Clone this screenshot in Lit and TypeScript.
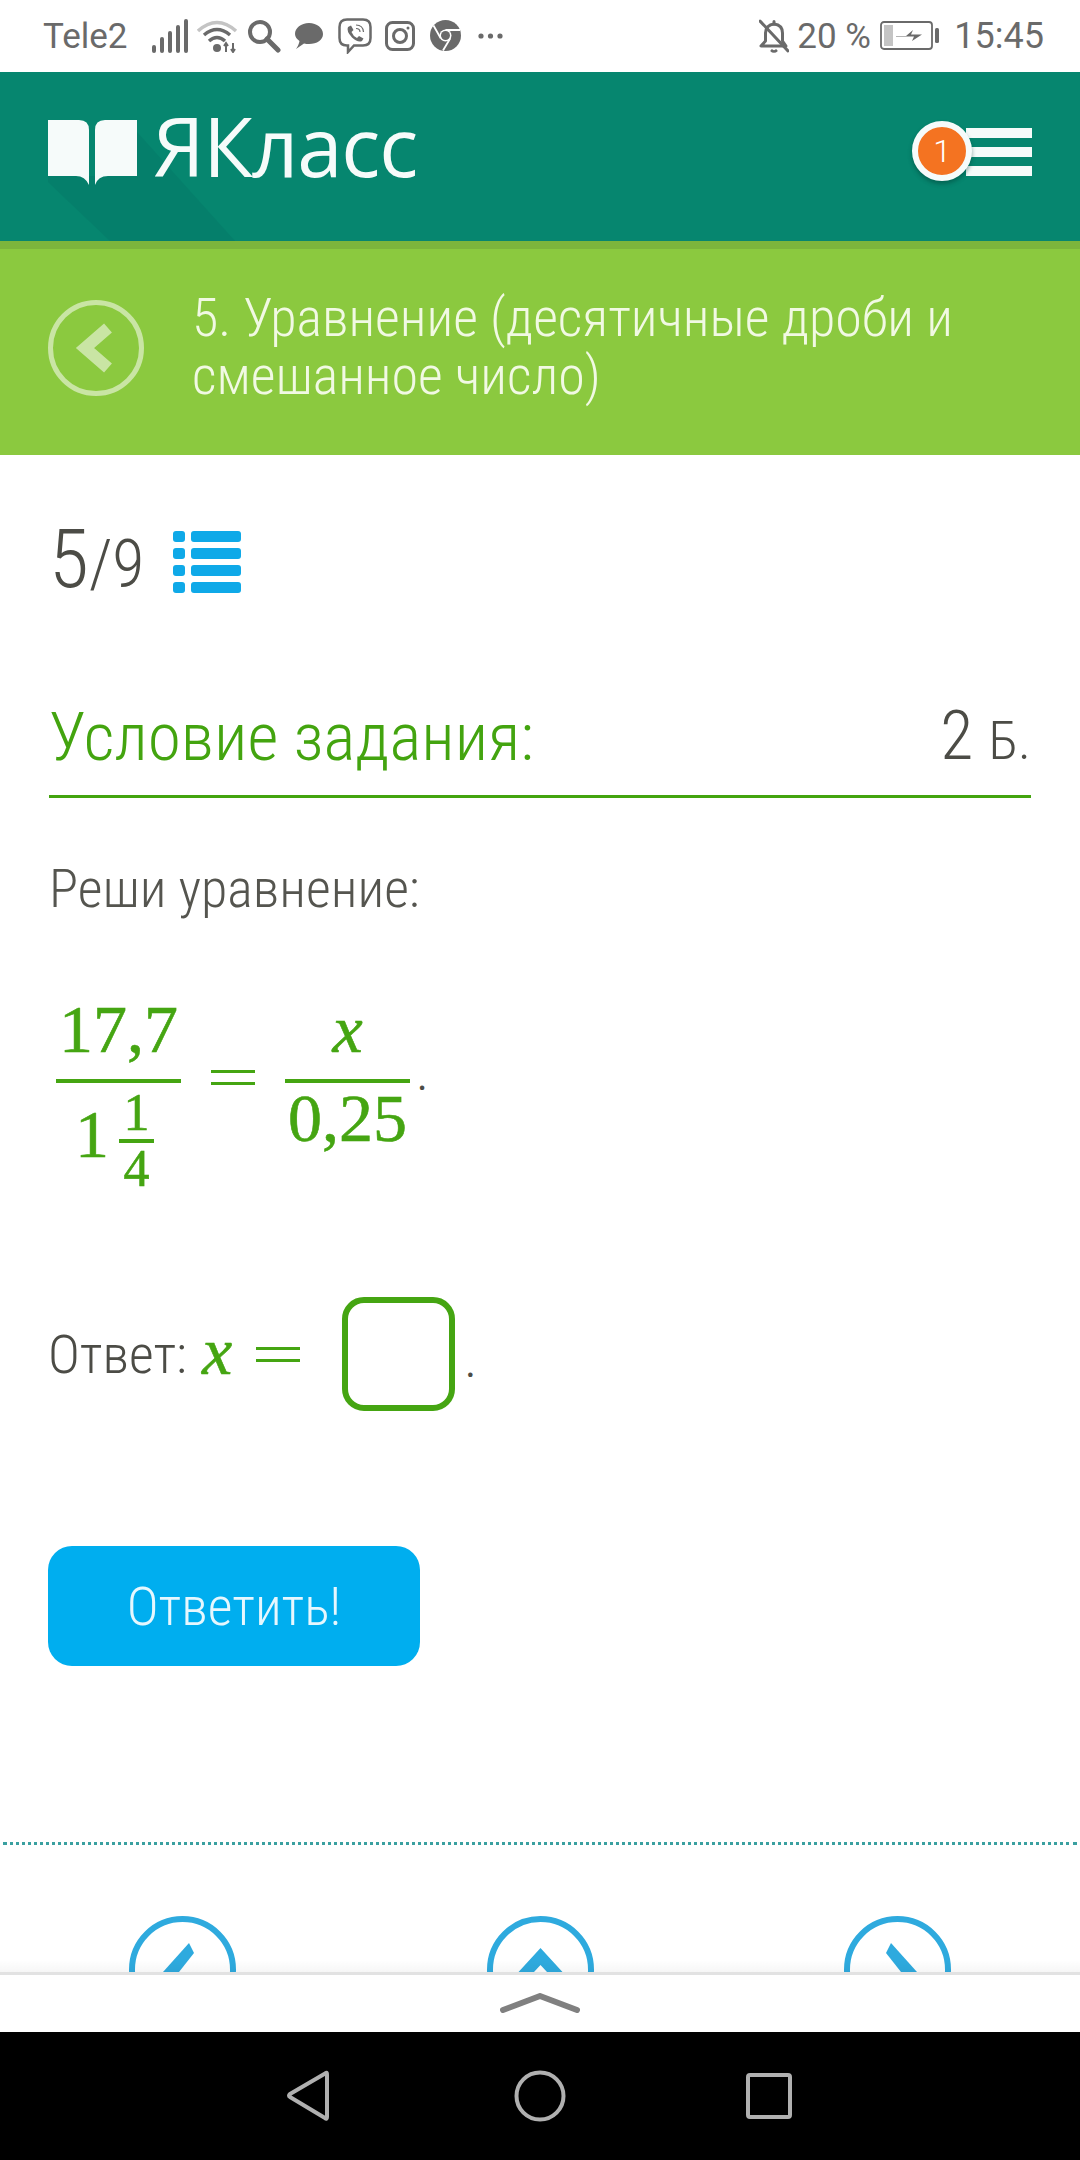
import { LitElement, html, css, svg } from "lit";
import { customElement } from "lit/decorators.js";

const GREY = "#6a6a6a";

@customElement("app-root")
export class AppRoot extends LitElement {
  static styles = css`
    :host { display: flex; flex-direction: column; width: 1080px; height: 2160px; background: #fff; overflow: hidden; font-family: Roboto, "Liberation Sans", sans-serif; }
    svg { display: block; flex: none; }
    .status { height: 72px; flex: none; display: flex; align-items: center; padding: 0 36px 0 43px; box-sizing: border-box; color: #6a6a6a; font-size: 35px; gap: 0; }
    .status .spacer { flex: 1; }
    .status svg { margin-top: -1px; }
    .tele { width: 109px; }
    .pct { width: 85px; margin-left: 8px; }
    .time { margin-left: 14px; font-size: 36px; }

    .header { position: relative; height: 169px; flex: none; background: #06866f; display: flex; align-items: flex-start; padding: 48px 48px 0; box-sizing: border-box; border-bottom: 0; overflow: hidden; }
    .shadow { position: absolute; left: 0; top: 0; }
    .logo { position: relative; display: flex; }
    .logotext { position: relative; font-family: "Open Sans", sans-serif; font-weight: 400; font-size: 81.5px; line-height: 77px; color: #f6fbfa; margin-left: 16px; letter-spacing: -1.2px; margin-top: -13px; }
    .menu { position: relative; margin-left: auto; width: 66px; display: flex; flex-direction: column; gap: 9px; padding-top: 8px; margin-right: 0; }
    .menu i { display: block; height: 10px; background: #f6fbfa; }
    .badge { position: absolute; left: -54px; top: 1px; width: 48px; height: 48px; border: 6px solid #f6fbfa; border-radius: 50%; background: #f47321; color: #fff; font-size: 32px; font-weight: 300; display: flex; align-items: center; justify-content: center; box-shadow: 0 3px 4px rgba(0,60,50,.45); }

    .band { flex: none; height: 214px; background: #8bc93f; border-top: 8px solid #7cb53c; box-sizing: border-box; display: flex; align-items: center; padding: 0 48px 6px; gap: 48px; }
    .back { width: 96px; height: 96px; flex: none; margin-top: -2px; }
    .title { font-family: Roboto, sans-serif; font-weight: 300; font-stretch: 75%; font-size: 54px; line-height: 58px; color: #f1f9e3; width: 800px; margin-top: -4px; }

    main { flex: 1; min-height: 0; overflow: hidden; padding: 0 49px; display: flex; flex-direction: column; color: #4c4c46; font-family: Roboto, sans-serif; font-weight: 300; font-stretch: 75%; }
    .count { display: flex; align-items: flex-end; height: 80px; margin-top: 70px; gap: 29px; }
    .count .num { font-size: 82px; line-height: 80px; }
    .count .num small { font-size: 66px; }
    .list { display: grid; grid-template-columns: 12px 50px; gap: 6px; margin-bottom: 12px; }
    .list i { display: block; height: 11px; background: #0fa9e8; border-radius: 3px; }
    .cond { display: flex; justify-content: space-between; align-items: flex-start; border-bottom: 3px solid #43a40f; margin-top: 89px; height: 101px; box-sizing: content-box; }
    .cond .h { font-size: 67.5px; line-height: 85px; color: #43a40f; }
    .cond .pts { font-size: 68px; line-height: 85px; }
    .cond .pts small { font-size: 54px; }
    .task { font-size: 54px; line-height: 60px; margin-top: 61px; color: #55554f; }

    .math { font-family: "Liberation Serif", serif; font-stretch: normal; font-weight: 400; color: #45a512; -webkit-text-stroke: 0.6px #45a512; }
    .eq { display: flex; align-items: flex-start; margin-top: 80px; height: 195px; margin-left: 7px; }
    .frac { display: flex; flex-direction: column; align-items: center; width: 125px; font-size: 68px; }
    .n { height: 80px; line-height: 60px; border-bottom: 4px solid #45a512; width: 100%; text-align: center; box-sizing: content-box; }
    .d { line-height: 70px; display: flex; align-items: flex-start; justify-content: center; width: 100%; }
    .x { font-style: italic; }
    .mixed { padding-top: 6px; gap: 10px; margin-left: -8px; }
    .mixed > span { margin-top: 10px; }
    .small { display: flex; flex-direction: column; align-items: center; width: 35px; font-size: 52px; margin-top: 0; }
    .small .top { line-height: 48px; height: 50px; border-bottom: 4px solid #45a512; width: 100%; text-align: center; }
    .small .bot { line-height: 52px; }
    .equals { display: flex; flex-direction: column; gap: 9px; width: 44px; flex: none; }
    .equals i { display: block; height: 3px; background: #45a512; }
    .eqsign { margin: 71px 30px 0 30px; }
    .dot { color: #4c4c46; font-family: Roboto, sans-serif; font-size: 40px; -webkit-text-stroke: 0; font-weight: 400; margin: 58px 0 0 7px; line-height: 40px; }

    .answer { display: flex; align-items: center; height: 114px; margin-top: 103px; font-size: 54px; margin-left: -1px; }
    .answer .x { font-family: "Liberation Serif", serif; font-stretch: normal; font-size: 68px; margin-left: 15px; line-height: 60px; margin-top: -6px; color: #45a512; -webkit-text-stroke: 0.6px #45a512; }
    .answer .equals { margin: 0 40px 0 24px; }
    .box { width: 113px; height: 114px; box-sizing: border-box; border: 6px solid #45a512; border-radius: 22px; flex: none; margin-left: 2px; }
    .answer .end { margin-left: 10px; margin-top: 18px; font-size: 40px; font-weight: 400; }

    .btn { width: 372px; height: 120px; border-radius: 24px; background: #00aeef; color: #e6f7fe; font-size: 54px; display: flex; align-items: center; justify-content: center; margin-top: 135px; margin-left: -1px; flex: none; }

    .dotted { flex: none; height: 0; border-top: 3px dotted #3aa0a0; margin: 176px -46px 0; }
    .actions { display: flex; justify-content: space-between; margin: 71px 0 0 80px; width: 822px; flex: none; }

    .sheet { position: relative; flex: none; height: 60px; background: #fff; border-top: 3px solid #e2e2e2; box-sizing: border-box; display: flex; justify-content: center; padding-top: 18px; }
    .sheet::before { content: ""; position: absolute; left: 0; right: 0; top: -15px; height: 12px; background: linear-gradient(rgba(0,0,0,0), rgba(0,0,0,.035)); }
    .nav { flex: none; height: 128px; box-sizing: border-box; background: #000; display: flex; align-items: flex-start; padding: 38px 0 0 286px; }
    .nav .c { margin-left: 184px; }
    .nav .s { margin-left: 180px; margin-top: 3px; }
  `;

  private statusLeft() {
    return html`
      <svg width="36" height="34" viewBox="0 0 36 34" fill="${GREY}">
        <rect x="0" y="26" width="4" height="8" rx="2"/><rect x="8" y="18" width="4" height="16" rx="2"/><rect x="16" y="12" width="4" height="22" rx="2"/><rect x="24" y="6" width="4" height="28" rx="2" /><rect x="32" y="0" width="4" height="34" rx="2"/>
      </svg>
      <svg style="margin-left:9px" width="41" height="34" viewBox="0 0 41 34" fill="none">
        <path d="M1 12 Q20 -5 39 12" stroke="#c4c4c4" stroke-width="3.5"/>
        <path d="M7 16 Q20 5 33 16" stroke="${GREY}" stroke-width="3.5"/>
        <path d="M12 22 Q20 15 28 22" stroke="${GREY}" stroke-width="3.5"/>
        <circle cx="20" cy="29" r="4" fill="${GREY}"/>
        <path d="M29 33 V24 M36 33 V24 M27 27 l2-3 2 3 M34 30 l2 3 2-3" stroke="${GREY}" stroke-width="2"/>
      </svg>
      <svg style="margin-left:9px" width="34" height="34" viewBox="0 0 34 34" fill="none" stroke="${GREY}">
        <circle cx="13" cy="13" r="10" stroke-width="4"/><path d="M20 20 L31 31" stroke-width="5" stroke-linecap="round"/>
      </svg>
      <svg style="margin-left:14px" width="28" height="28" viewBox="0 0 28 28" fill="${GREY}">
        <path d="M14 1 C22 1 28 6 28 12 C28 18 22 22 14 22 C12 22 11 22 9 21.500 L1 27 C3 24 4 22 4.500 19 C2 17 0 15 0 12 C0 6 6 1 14 1Z"/>
      </svg>
      <svg style="margin-left:15px" width="34" height="36" viewBox="0 0 34 36" fill="none" stroke="${GREY}" stroke-width="2.500">
        <path d="M9 1.500 H25 Q32.500 1.500 32.500 9 V20 Q32.500 27.500 25 27.500 H16 L10 34 V27.500 H9 Q1.500 27.500 1.500 20 V9 Q1.500 1.500 9 1.500Z"/>
        <path d="M10 9 L13 7.500 L15.500 12 L13.500 14 Q15 18 19 20 L21 18 L25.500 20.500 L24 23 Q20 25 14 19.500 Q8 13 10 9Z" fill="${GREY}" stroke="none"/>
        <path d="M18 7 Q25 7 25.500 14 M18 10.500 Q22 10.500 22 14" stroke-width="1.200"/>
      </svg>
      <svg style="margin-left:13px" width="30" height="30" viewBox="0 0 30 30" fill="none" stroke="${GREY}" stroke-width="3">
        <rect x="1.500" y="1.500" width="27" height="27" rx="6"/><circle cx="15" cy="15" r="6.500"/><circle cx="23" cy="7" r="1.500" fill="${GREY}" stroke="none"/>
      </svg>
      <svg style="margin-left:15px" width="31" height="31" viewBox="0 0 31 31">
        <circle cx="15.500" cy="15.500" r="15.500" fill="${GREY}"/>
        <circle cx="15.500" cy="15.500" r="6" fill="#fff"/><circle cx="15.500" cy="15.500" r="4.500" fill="${GREY}"/>
        <path d="M15.500 10 H30 M10.700 18.200 L3.500 5.500 M20.300 18.200 L13 30.500" stroke="#fff" stroke-width="1.800"/>
      </svg>
      <svg style="margin-left:17px" width="25" height="6" viewBox="0 0 25 6" fill="${GREY}"><circle cx="3" cy="3" r="2.600"/><circle cx="12.500" cy="3" r="2.600"/><circle cx="22" cy="3" r="2.600"/></svg>
    `;
  }

  private statusRight() {
    return html`
      <svg width="30" height="34" viewBox="0 0 30 34" fill="none" stroke="${GREY}" stroke-width="3">
        <path d="M2 27 H27 L23.500 22 V14 Q23.500 6 15 5 Q7 6 6.500 14 V22Z" stroke-linejoin="round"/>
        <path d="M12 31 Q15 34 18 31" stroke-width="2.500"/>
        <path d="M15 5 V2.500 M1 2 L29 32" stroke-width="3" stroke-linecap="round"/>
      </svg>
      <span class="pct">20 %</span>
      <svg style="margin-left:-2px" width="60" height="30" viewBox="0 0 60 30" fill="none">
        <rect x="1" y="1" width="51" height="27" rx="3" stroke="${GREY}" stroke-width="1.800"/>
        <rect x="4" y="4" width="9" height="21" fill="#c4c4c4"/>
        <rect x="55" y="7" width="4" height="15" rx="1.500" fill="${GREY}"/>
        <path d="M16 15 H26 L33 9 L31 13.500 H42 L32 20 L34 15.500 H16Z" fill="${GREY}"/>
      </svg>
      <span class="time">15:45</span>
    `;
  }

  private circleIcon(inner: unknown) {
    return html`<svg width="107" height="56" viewBox="0 0 107 56">
      <ellipse cx="53.500" cy="53.500" rx="50.500" ry="50.500" fill="none" stroke="#2eaade" stroke-width="6"/>
      ${inner}
    </svg>`;
  }

  render() {
    return html`
      <div class="status">
        <span class="tele">Tele2</span>
        ${this.statusLeft()}
        <span class="spacer"></span>
        ${this.statusRight()}
      </div>

      <div class="header">
        <svg class="shadow" width="300" height="169" viewBox="0 0 300 169">
          <path d="M48 110 L110 169 H235 L137 60 V104 H48Z" fill="#057f6b"/>
        </svg>
        <div class="logo">
          <svg width="89" height="65" viewBox="48 120 89 65" fill="#f6fbfa">
            <path d="M48 120 H79 Q89 120 89 130 V185 Q85 176 76 176 H48Z"/>
            <path d="M137 120 H105 Q95 120 95 130 V185 Q98 176 108 176 H137Z"/>
          </svg>
          <span class="logotext">ЯКласс</span>
        </div>
        <div class="menu">
          <i></i><i></i><i></i>
          <span class="badge">1</span>
        </div>
      </div>

      <div class="band">
        <svg class="back" viewBox="0 0 96 96" fill="none" stroke="#c9e5a4">
          <circle cx="48" cy="48" r="45.500" stroke-width="5"/>
          <path d="M60 28 L37 48 L60 68" stroke-width="12"/>
        </svg>
        <div class="title">5. Уравнение (десятичные дроби и смешанное число)</div>
      </div>

      <main>
        <div class="count">
          <span class="num">5<small>/9</small></span>
          <div class="list"><i></i><i></i><i></i><i></i><i></i><i></i><i></i><i></i></div>
        </div>
        <div class="cond">
          <span class="h">Условие задания:</span>
          <span class="pts">2 <small>Б.</small></span>
        </div>
        <div class="task">Реши уравнение:</div>

        <div class="eq math">
          <div class="frac">
            <div class="n">17,7</div>
            <div class="d mixed"><span>1</span>
              <div class="small"><div class="top">1</div><div class="bot">4</div></div>
            </div>
          </div>
          <div class="equals eqsign"><i></i><i></i></div>
          <div class="frac">
            <div class="n x">x</div>
            <div class="d">0,25</div>
          </div>
          <span class="dot">.</span>
        </div>

        <div class="answer">
          <span>Ответ:</span>
          <span class="x">x</span>
          <div class="equals"><i></i><i></i></div>
          <div class="box"></div>
          <span class="end">.</span>
        </div>

        <div class="btn">Ответить!</div>

        <div class="dotted"></div>
        <div class="actions">
          ${this.circleIcon(svg`<path d="M60 27 L65 37 L50 56 H34Z" fill="#2eaade"/>`)}
          ${this.circleIcon(svg`<path d="M53.500 32 L75.500 56 H60 L53.500 49 L47 56 H31.500Z" fill="#2eaade"/>`)}
          ${this.circleIcon(svg`<path d="M47 27 L42 37 L57 56 H73Z" fill="#2eaade"/>`)}
        </div>
      </main>

      <div class="sheet">
        <svg width="80" height="20" viewBox="0 0 80 20" fill="none"><path d="M3 17 L40 3 L77 17" stroke="#808080" stroke-width="6" stroke-linecap="round" stroke-linejoin="round"/></svg>
      </div>

      <div class="nav">
        <svg width="44" height="52" viewBox="0 0 44 52" fill="none" stroke="#b0b0b0" stroke-width="4"><path d="M40 3 Q41 2 41 5 V47 Q41 50 39 48 L4 27 Q2 26 4 24Z" stroke-linejoin="round"/></svg>
        <svg class="c" width="52" height="52" viewBox="0 0 52 52" fill="none" stroke="#b0b0b0" stroke-width="4"><circle cx="26" cy="26" r="23.500"/></svg>
        <svg class="s" width="46" height="46" viewBox="0 0 46 46" fill="none" stroke="#b0b0b0" stroke-width="4"><rect x="2" y="2" width="42" height="42" rx="2"/></svg>
      </div>
    `;
  }
}
